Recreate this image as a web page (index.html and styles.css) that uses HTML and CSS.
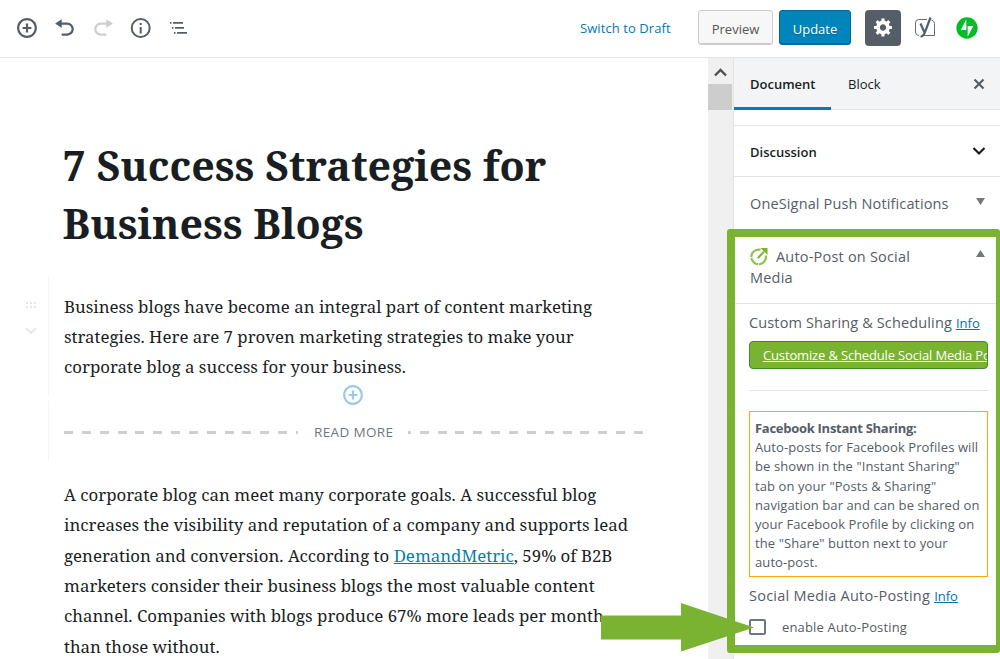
FILE: index.html
```html
<!DOCTYPE html>
<html lang="en">
<head>
<meta charset="utf-8">
<title>Edit Post</title>
<link rel="stylesheet" href="styles.css">
</head>
<body>
<div class="app">
  <header class="header">
    <div class="tools">
      <svg width="22" height="22" viewBox="0 0 20 20" fill="#555d66"><path d="M10 1c-5 0-9 4-9 9s4 9 9 9 9-4 9-9-4-9-9-9zm0 16c-3.900 0-7-3.100-7-7s3.100-7 7-7 7 3.100 7 7-3.100 7-7 7zm1-11H9v3H6v2h3v3h2v-3h3V9h-3V6z"/></svg>
      <svg width="22" height="22" viewBox="0 0 20 20" fill="#555d66"><path d="M12 5H7V2L1 6l6 4V7h5c2.200 0 4 1.800 4 4s-1.800 4-4 4H7v2h5c3.300 0 6-2.700 6-6s-2.700-6-6-6z"/></svg>
      <svg width="22" height="22" viewBox="0 0 20 20" fill="#cccfd1"><path d="M8 5h5V2l6 4-6 4V7H8c-2.200 0-4 1.800-4 4s1.800 4 4 4h5v2H8c-3.300 0-6-2.700-6-6s2.700-6 6-6z"/></svg>
      <svg width="22" height="22" viewBox="1.300 1 22 22" fill="#555d66"><path d="M11 7h2v2h-2zm0 4h2v6.500h-2zM12 2a10 10 0 1 0 0 20 10 10 0 0 0 0-20zm0 18a8 8 0 1 1 0-16 8 8 0 0 1 0 16z"/></svg>
      <svg width="20" height="20" viewBox="0 0 20 20" fill="#555d66"><path d="M2 4h1.500v1.800H2zM5 4h10v1.800H5zM4 9h1.500v1.800H4zM7 9h9v1.800H7zM6 14h1.500v1.800H6zM9 14h10v1.800H9z"/></svg>
    </div>
    <div class="actions">
      <a class="draft">Switch to Draft</a>
      <button class="btn preview">Preview</button>
      <button class="btn update">Update</button>
      <button class="gear"><svg width="21" height="21" viewBox="0 0.500 20 20" fill="#fff"><path d="M18 12h-2.180c-.170.700-.440 1.350-.810 1.930l1.540 1.540-2.100 2.100-1.540-1.540c-.580.360-1.230.630-1.910.790V19H8v-2.180c-.680-.160-1.330-.430-1.910-.790l-1.540 1.540-2.120-2.120 1.540-1.540c-.360-.580-.630-1.230-.790-1.910H1V9.030h2.170c.160-.700.440-1.350.800-1.940L2.430 5.550l2.100-2.100 1.540 1.540c.580-.370 1.240-.640 1.930-.810V2h3v2.180c.680.160 1.330.430 1.910.790l1.540-1.540 2.120 2.120-1.540 1.540c.360.590.640 1.240.800 1.940H18V12zm-8.500 1.500c1.660 0 3-1.340 3-3s-1.340-3-3-3-3 1.340-3 3 1.340 3 3 3z"/></svg></button>
      <svg class="yoast" width="21" height="22" viewBox="0 0 21 22" fill="none" stroke="#646b73"><path d="M13 2.500H4.500Q1.500 2.500 1.500 6v9q0 3.500 3.500 3.500M17.500 3q3 1 3 3.500v12H9"/><path stroke="#555d66" stroke-width="2.200" d="M6.500 6.500l4 9M16.500 .500L11 15q-1.500 4.500-4.500 4.500"/></svg>
      <svg class="jet" width="22" height="22" viewBox="0 0 32 32"><circle cx="16" cy="16" r="15.500" fill="#00be28"/><path fill="#fff" d="M15 3.200V18.800H7zM17 28.800V13.200h8z"/></svg>
    </div>
  </header>
  <div class="main">
    <main class="editor">
      <h1 class="title"><span>7 Success Strategies for</span><span>Business Blogs</span></h1>
      <div class="block first">
        <div class="mover">
          <svg width="12" height="8" viewBox="0 0 12 8" fill="#e3e5e6"><path d="M1 1h2v2H1zM5 1h2v2H5zM9 1h2v2H9zM1 5h2v2H1zM5 5h2v2H5zM9 5h2v2H9z"/></svg>
          <svg width="12" height="8" viewBox="0 0 12 8" fill="none" stroke="#e6e8e9" stroke-width="2"><path d="M1 1l5 5 5-5"/></svg>
        </div>
        <p class="copy"><span>Business blogs have become an integral part of content marketing</span><span>strategies. Here are 7 proven marketing strategies to make your</span><span>corporate blog a success for your business.</span></p>
        <svg class="insert" width="22" height="22" viewBox="0 0 20 20" fill="#99cbe4"><path d="M10 1c-5 0-9 4-9 9s4 9 9 9 9-4 9-9-4-9-9-9zm0 16c-3.900 0-7-3.100-7-7s3.100-7 7-7 7 3.100 7 7-3.100 7-7 7zm1-11H9v3H6v2h3v3h2v-3h3V9h-3V6z"/></svg>
      </div>
      <div class="block more"><i class="dash left"></i><span>READ MORE</span><i class="dash right"></i></div>
      <p class="copy second"><span>A corporate blog can meet many corporate goals. A successful blog</span><span>increases the visibility and reputation of a company and supports lead</span><span>generation and conversion. According to <a>DemandMetric</a>, 59% of B2B</span><span>marketers consider their business blogs the most valuable content</span><span>channel. Companies with blogs produce 67% more leads per month</span><span>than those without.</span></p>
    </main>
    <div class="scroll"><svg width="24" height="26" viewBox="0 0 24 26" fill="none" stroke="#505050" stroke-width="2.400"><path d="M7 17.500l5.500-5.500 5.500 5.500"/></svg><div class="thumb"></div></div>
    <aside class="side">
      <nav class="tabs"><span class="tab active"><b>Document</b></span><span class="tab block-tab">Block</span>
        <svg width="12" height="12" viewBox="0 0 12 12" stroke="#555d66" stroke-width="2.200"><path d="M1.500 1.500l9 9M10.500 1.500l-9 9"/></svg></nav>
      <div class="gap"></div>
      <div class="row discussion"><b>Discussion</b><svg width="14" height="10" viewBox="0 0 14 10" fill="none" stroke="#191e23" stroke-width="2.200"><path d="M1.500 2l5.500 5.500 5.500-5.500"/></svg></div>
      <div class="row onesignal"><span class="large">OneSignal Push Notifications</span><svg width="10" height="8" viewBox="0 0 10 8" fill="#72777c"><path d="M0 0h9L4.500 7z"/></svg></div>
      <section class="auto">
        <div class="autohead">
          <div><h2><svg width="18" height="18" viewBox="0 0 18 18"><path fill="none" stroke="#8bc34f" stroke-width="2.200" d="M10.500 1.900A7.300 7.300 0 1 0 15.800 7.500"/><path stroke="#fff" stroke-width=".8" d="M0 9.500h3M8.500 15v3"/><path stroke="#7ab231" stroke-width="2" d="M7.800 10.200l6-6.500"/><path fill="#7ab231" d="M10.500 0h7v7z"/></svg><span class="large">Auto-Post on Social</span></h2><div class="large">Media</div></div>
          <svg width="10" height="8" viewBox="0 0 10 8" fill="#72777c"><path d="M0 7h9L4.500 0z"/></svg>
        </div>
        <div class="autobody">
          <div class="label"><span class="large">Custom Sharing &amp; Scheduling</span><a>Info</a></div>
          <div class="customize"><span>Customize &amp; Schedule Social Media Po</span></div>
          <div class="rule"></div>
          <div class="notice"><strong>Facebook Instant Sharing:</strong><span>Auto-posts for Facebook Profiles will</span><span>be shown in the "Instant Sharing"</span><span>tab on your "Posts &amp; Sharing"</span><span>navigation bar and can be shared on</span><span>your Facebook Profile by clicking on</span><span>the "Share" button next to your</span><span>auto-post.</span></div>
          <div class="label bottom"><span class="large">Social Media Auto-Posting</span><a>Info</a></div>
          <div class="check"><i></i><span>enable Auto-Posting</span></div>
        </div>
      </section>
    </aside>
  </div>
  <svg class="arrow" width="154" height="50" viewBox="0 0 154 50"><path fill="#7ab231" d="M0 13.500h80V1L153 25.500 80 49.500V37.500H0z"/></svg>
</div>
</body>
</html>
```
FILE: styles.css
```css
* { box-sizing: border-box; }
body { margin: 0; background: #fff; font-family: "Open Sans", "Noto Sans", sans-serif; font-size: 13px; color: #555d66; }
svg { display: block; flex: none; }
.app { position: relative; width: 1000px; height: 659px; overflow: hidden; display: flex; flex-direction: column; }
.header { height: 58px; flex: none; border-bottom: 1px solid #e2e4e7; display: flex; justify-content: space-between; align-items: center; padding: 0 22px 2px 16px; }
.tools { display: flex; align-items: center; gap: 16px; }
.actions { display: flex; align-items: center; white-space: nowrap; }
.draft { color: #0079b5; margin-right: 27px; width: 91px; letter-spacing: .08px; }
.btn { height: 35px; padding: 3px 0 0; font: 13px "Open Sans", sans-serif; border-radius: 3px; }
.preview { width: 75px; margin-right: 6px; background: #f7f7f7; border: 1px solid #ccc; box-shadow: inset 0 -1px 0 #ccc; color: #555; }
.update { width: 72px; margin-right: 14px; background: #0085ba; border: 1px solid #006a95; box-shadow: inset 0 -1px 0 #006a95; color: #fff; text-shadow: 0 1px 1px #006799; }
.gear { width: 36px; height: 36px; margin-right: 13px; padding: 0; border: 0; border-radius: 4px; background: #555d66; display: flex; align-items: center; justify-content: center; }
.yoast { margin-right: 21px; }
.main { flex: 1; min-height: 0; display: flex; }
.editor { width: 708px; padding: 78px 0 0 48px; color: #191e23; font-family: "Noto Serif", "DejaVu Serif Condensed", "DejaVu Serif", serif; white-space: nowrap; }
.title { margin: 0; padding-left: 14.500px; font-size: 41.180px; line-height: 58px; font-weight: 700; }
.title span, .copy span { display: block; }
.block { position: relative; border-left: 1px solid #f3f4f5; padding-left: 15px; }
.first { margin-top: 24px; height: 120px; padding-top: 16px; }
.first .copy { line-height: 30px; }
.mover { position: absolute; left: -24px; top: 25px; display: grid; gap: 18px; }
.copy { margin: 0; font-size: 16.830px; line-height: 30.350px; }
.insert { position: absolute; left: 293px; top: 108px; }
.more { margin-top: 5px; height: 60px; display: flex; align-items: center; padding-top: 2px; font: 13.500px "Open Sans", sans-serif; color: #6c7781; }
.more span { width: 79px; margin: 0 15px 0 16px; letter-spacing: .35px; }
.dash { height: 3px; }
.left { width: 234px; background: repeating-linear-gradient(90deg, #cccfd4 0 9px, transparent 9px 17.850px); }
.right { width: 235px; background: repeating-linear-gradient(270deg, #cccfd4 0 9px, transparent 9px 17.850px); }
.second { padding: 19px 0 0 16px; }
.copy a { color: #007fac; text-decoration: underline; }
.scroll { width: 25px; background: #f0f0f0; }
.thumb { width: 24px; height: 26px; background: #cdcdcd; }
.side { width: 267px; border-left: 1px solid #e2e4e7; background: #fff; white-space: nowrap; }
.tabs { height: 52px; background: #f3f4f5; border-bottom: 1px solid #e2e4e7; display: flex; align-items: center; color: #191e23; padding-right: 15px; }
.tab { height: 52px; line-height: 53px; padding: 0 16px; }
.block-tab { padding-left: 17px; }
.active { width: 97px; border-bottom: 3px solid #007cba; padding-right: 0; }
.tabs svg { margin-left: auto; }
b { font-weight: 600; }
.large { font-size: 14.500px; letter-spacing: .14px; }
.gap { height: 15px; }
.row { display: flex; align-items: center; justify-content: space-between; border-top: 1px solid #e2e4e7; padding: 0 14px 0 16px; }
.discussion { height: 51px; color: #191e23; }
.discussion b { padding-top: 2px; }
.onesignal { height: 53px; }
.onesignal svg { margin-top: -3px; }
.auto { width: 273px; height: 424px; margin: 0 0 0 -7px; border: 8px solid #7ab231; border-right-width: 4px; border-radius: 3px; background: #fff; position: relative; }
.autohead { height: 67px; border-bottom: 1px solid #e2e4e7; display: flex; justify-content: space-between; padding: 9px 10px 0 15px; line-height: 21px; }
.autohead > svg { margin-top: 4px; }
.autohead .large { letter-spacing: .2px; }
.autohead h2 { display: flex; align-items: center; gap: 8px; margin: 0; font: inherit; }
.autobody { padding: 9px 8px 0 14px; }
.label { display: flex; align-items: baseline; gap: 4px; line-height: 20px; }
.label a { color: #0073aa; text-decoration: underline; }
.customize { margin-top: 8px; height: 28px; border: 1px solid #3f8a33; border-radius: 4px; background: #7ab231; color: #fff; padding-left: 13px; line-height: 26px; overflow: hidden; text-decoration: underline; letter-spacing: -.15px; }
.rule { margin: 21px 0 20px; height: 1px; background: #e2e4e7; }
.notice { height: 166px; border: 1px solid #ffa500; padding: 7px 5px; line-height: 19.200px; letter-spacing: .09px; }
.notice span, .notice strong { display: block; }
.notice strong { letter-spacing: -.28px; }
.bottom { margin-top: 9px; }
.bottom .large { letter-spacing: .25px; }
.check { display: flex; align-items: center; gap: 16px; margin-top: 11px; height: 19px; letter-spacing: .16px; }
.check i { width: 17px; height: 16px; border: 2px solid #6c7781; border-radius: 2px; }
.arrow { position: absolute; left: 601px; top: 602px; }
```
